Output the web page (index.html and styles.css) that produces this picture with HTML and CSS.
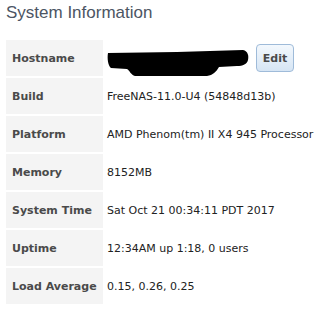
FILE: index.html
```html
<!DOCTYPE html>
<html lang="en">
<head>
    <meta charset="UTF-8">
    <title>System Information</title>
    <link rel="stylesheet" href="styles.css">
</head>
<body>

    <h2 class="title">System Information</h2>

    <table class="info">
        <tr>
            <th>Hostname</th>
            <td>
                <div class="host">
                    <svg class="redact" width="142" height="28" viewBox="0 0 142 28">
                        <path d="M1 5 L70 4 L136 2 C141 3 142 8 141 12 C140 16 136 18 130 18 L112 19 C109 24 106 27 100 28 L28 28 C24 27 23 23 20 21 L4 20 C1 18 0 10 1 5 Z" fill="#000"/>
                    </svg>
                    <button class="edit">Edit</button>
                </div>
            </td>
        </tr>
        <tr><th>Build</th><td>FreeNAS-11.0-U4 (54848d13b)</td></tr>
        <tr><th>Platform</th><td>AMD Phenom(tm) II X4 945 Processor</td></tr>
        <tr><th>Memory</th><td>8152MB</td></tr>
        <tr><th>System Time</th><td>Sat Oct 21 00:34:11 PDT 2017</td></tr>
        <tr><th>Uptime</th><td>12:34AM up 1:18, 0 users</td></tr>
        <tr><th>Load Average</th><td>0.15, 0.26, 0.25</td></tr>
    </table>

</body>
</html>
```
FILE: styles.css
```css
* {
    margin: 0; padding: 0;
    box-sizing: border-box;
}
body {
    background: #fff;
    padding: 0 6px;
    font-family: "DejaVu Sans", Verdana, sans-serif;
    font-size: 11px;
    color: #222;
}
.title {
    font-family: "Liberation Sans", Arial, sans-serif;
    font-weight: normal;
    font-size: 17px;
    color: #4c5563;
    height: 38px;
    padding-top: 3px;
}
.info {
    border-collapse: separate;
    border-spacing: 0 2px;
}
.info th {
    width: 97px;
    height: 36px;
    background: #f4f4f4;
    color: #4a4a4a;
    text-align: left;
    padding-left: 6px;
    font-weight: bold;
    white-space: nowrap;
}
.info td {
    padding-left: 4px;
    white-space: nowrap;
}
.host {
    display: flex;
    align-items: flex-start;
    gap: 7px;
    height: 36px;
}
.redact {
    display: block;
    margin-top: 8px;
}
.edit {
    width: 38px;
    height: 28px;
    margin-top: 4px;
    border: 1px solid #9fbbd9;
    border-radius: 4px;
    background: linear-gradient(#f3f8fd, #d6e5f4);
    color: #4a4a4a;
    font-family: "DejaVu Sans", Verdana, sans-serif;
    font-size: 11px;
    font-weight: bold;
}
```
